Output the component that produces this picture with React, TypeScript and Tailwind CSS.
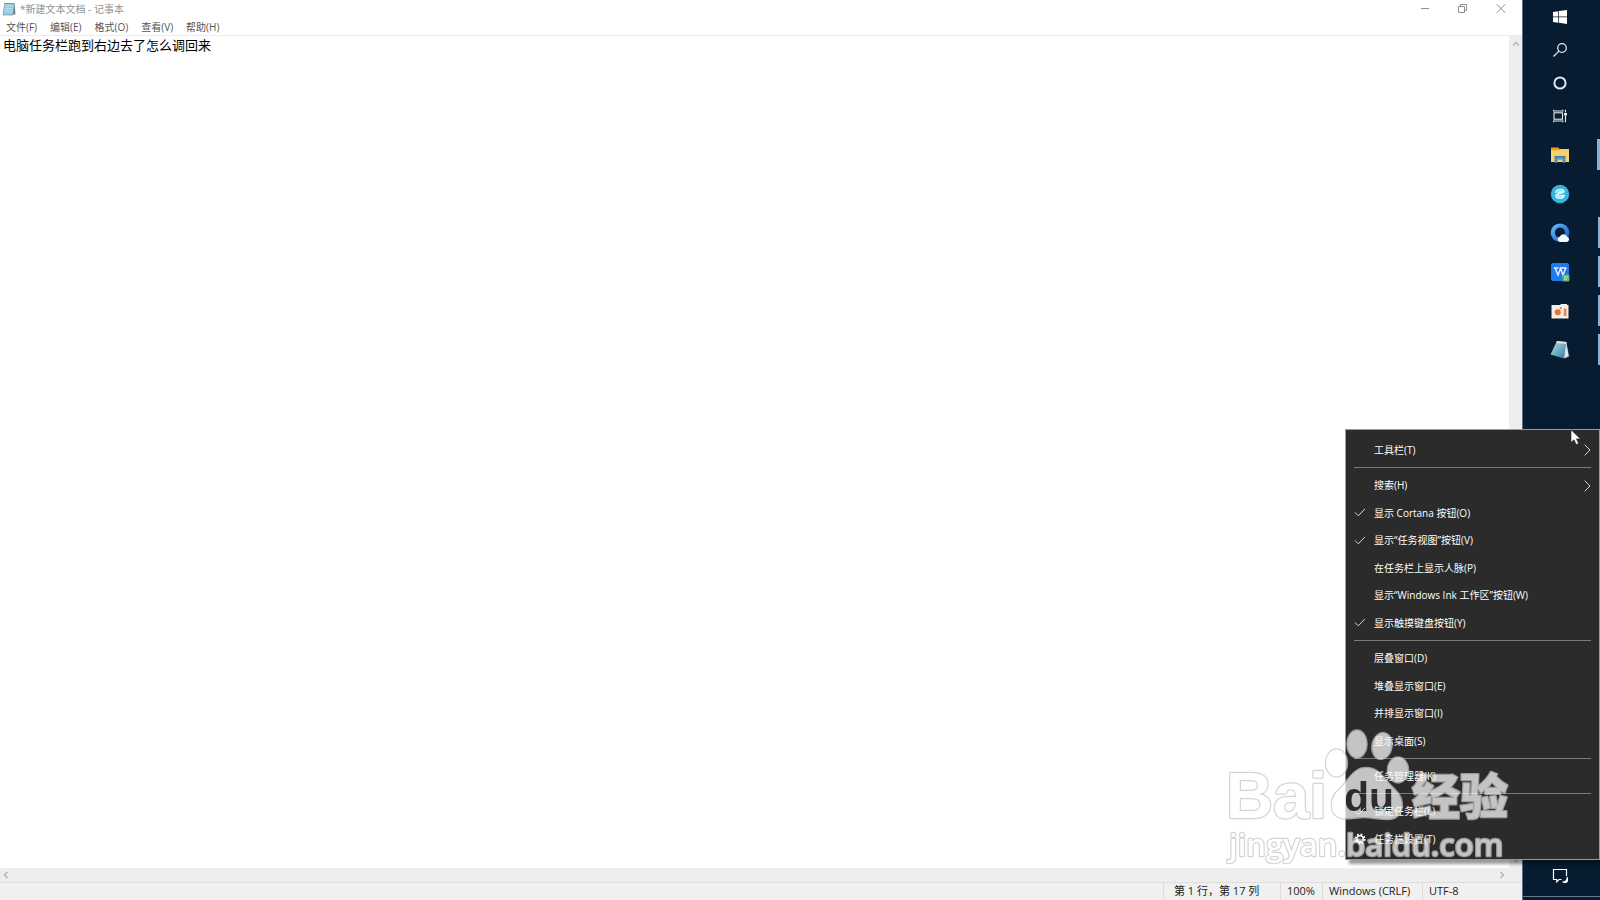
import { useState } from 'react'
import type { ReactNode } from 'react'

const MENUS = ['文件(F)', '编辑(E)', '格式(O)', '查看(V)', '帮助(H)']

type Item = { label: string; checked?: boolean; sub?: boolean; gear?: boolean }

const GROUPS: { height: string; items: Item[] }[] = [
  { height: 'h-[28px]', items: [{ label: '工具栏(T)', sub: true }] },
  {
    height: 'h-[165px]',
    items: [
      { label: '搜索(H)', sub: true },
      { label: '显示 Cortana 按钮(O)', checked: true },
      { label: '显示“任务视图”按钮(V)', checked: true },
      { label: '在任务栏上显示人脉(P)' },
      { label: '显示“Windows Ink 工作区”按钮(W)' },
      { label: '显示触摸键盘按钮(Y)', checked: true },
    ],
  },
  {
    height: 'h-[110px]',
    items: [{ label: '层叠窗口(D)' }, { label: '堆叠显示窗口(E)' }, { label: '并排显示窗口(I)' }, { label: '显示桌面(S)' }],
  },
  { height: 'h-[27px]', items: [{ label: '任务管理器(K)' }] },
  { height: 'h-[55px]', items: [{ label: '锁定任务栏(L)', checked: true }, { label: '任务栏设置(T)', gear: true }] },
]

function NotepadIcon({ className }: { className: string }) {
  return (
    <svg viewBox="0 0 20 20" className={className} aria-hidden="true">
      <defs>
        <linearGradient id="pad" x1="0" y1="0" x2="1" y2="1">
          <stop offset="0" stopColor="#b9dfe9" />
          <stop offset="1" stopColor="#2f7f9c" />
        </linearGradient>
      </defs>
      <path d="M16 1.5 L19.5 16.5 L15 18.5 Z" fill="#7d7a70" />
      <path d="M7 1 L16.5 2 L14 18.5 L0.5 14.5 Z" fill="url(#pad)" />
      <path d="M16.3 2 L18.5 16 L14 18.5 Z" fill="#dfe9e9" />
      <path d="M7 1 L16.5 2 L16.2 4 L6.2 3.1 Z" fill="#d9e3e4" />
    </svg>
  )
}

function TitleIcon() {
  return (
    <svg viewBox="0 0 14 14" className="h-3.5 w-3.5" aria-hidden="true">
      <path d="M2.8 1.5 H12.5 L11 13 H1 Z" fill="#9accdf" stroke="#6f97a6" strokeWidth="0.7" />
      <path d="M3.5 4 H10.8 M3.2 6.5 H10.5 M3 9 H10" stroke="#c0e3ee" strokeWidth="0.8" />
      <path d="M12.5 1.5 L13.5 12 L11 13 Z" fill="#6c7f86" />
      <path d="M2.5 1.5 H12.5" stroke="#77705f" strokeWidth="1.2" strokeDasharray="1 1" />
    </svg>
  )
}

const SYSTEM_BUTTONS: { name: string; icon: ReactNode }[] = [
  {
    name: '开始',
    icon: (
      <svg viewBox="0 0 14 14" className="h-3.5 w-3.5" fill="#fff">
        <path d="M0 2 L5.3 1.2 V6.5 H0 Z M6 1.1 L14 0 V6.5 H6 Z M0 7.3 H5.3 V12.7 L0 12 Z M6 7.3 H14 V14 L6 12.8 Z" />
      </svg>
    ),
  },
  {
    name: '搜索',
    icon: (
      <svg viewBox="0 0 14 14" className="h-3.5 w-3.5" fill="none" stroke="#e3e9ee" strokeWidth="1.3">
        <circle cx="9" cy="5" r="4.3" />
        <path d="M5.9 8.1 L0.5 13.5" />
      </svg>
    ),
  },
  {
    name: 'Cortana',
    icon: (
      <svg viewBox="0 0 14 14" className="h-3.5 w-3.5" fill="none" stroke="#dfe9f0" strokeWidth="2">
        <circle cx="7" cy="7" r="5.6" />
      </svg>
    ),
  },
  {
    name: '任务视图',
    icon: (
      <svg viewBox="0 0 14 14" className="h-3.5 w-3.5" fill="none" stroke="#e3e9ee" strokeWidth="1.1">
        <rect x="1" y="3.8" width="8.5" height="6.4" />
        <path d="M0.6 0.8 V2 H9.9 V0.8 M0.6 13.2 V12 H9.9 V13.2 M12.5 0.8 V3.5 M12.5 7 V13.2" />
        <rect x="11.2" y="4" width="2.6" height="2.6" fill="#fff" stroke="none" />
      </svg>
    ),
  },
]

const APPS: { name: string; mark: string; icon: ReactNode }[] = [
  {
    name: '文件资源管理器',
    mark: 'w-[3px]',
    icon: (
      <svg viewBox="0 0 20 20" className="h-5 w-5">
        <path d="M1 2.5 H8.5 L9.5 4 H19 V17 H1 Z" fill="#e2a11d" />
        <path d="M1 5.2 H10 L11 4 H19 V17 H1 Z" fill="#fad06c" />
        <path d="M4.5 17.8 V11 H15.5 V17.8 H12.5 V14.5 H7.5 V17.8 Z" fill="#4f94b8" />
        <path d="M4.5 11 H15.5 V12.2 H4.5 Z" fill="#3f7f9f" />
      </svg>
    ),
  },
  {
    name: '浏览器',
    mark: 'w-0',
    icon: (
      <svg viewBox="0 0 20 20" className="h-5 w-5">
        <circle cx="10" cy="10" r="9.2" fill="#37b4de" />
        <path
          d="M5.8 8.4 C6.5 5 13.4 4.4 14 7.4 C14.2 9.6 6.4 9 6 11.8 C6.2 15 13 15.2 14.2 11.6 M8 8.6 C10 7.4 11.6 7.6 12.4 7.8 M8 12 C10 12.4 12 11.6 14.2 11.2"
          fill="none"
          stroke="#d8f8fb"
          strokeWidth="1.6"
          strokeLinecap="round"
        />
      </svg>
    ),
  },
  {
    name: 'QQ浏览器',
    mark: 'w-[2px]',
    icon: (
      <svg viewBox="0 0 20 20" className="h-5 w-5">
        <defs>
          <linearGradient id="ring" x1="0" y1="0" x2="1" y2="1">
            <stop offset="0" stopColor="#5fb9f4" />
            <stop offset="1" stopColor="#1560cf" />
          </linearGradient>
        </defs>
        <circle cx="10" cy="9.7" r="7.2" fill="none" stroke="url(#ring)" strokeWidth="4.2" />
        <path d="M9.7 19 A2.9 2.9 0 0 1 9.9 13.4 A4 4 0 0 1 16.9 13.4 A2.9 2.9 0 0 1 17 19 Z" fill="#f7fbff" />
      </svg>
    ),
  },
  {
    name: 'WPS',
    mark: 'w-[2px]',
    icon: (
      <svg viewBox="0 0 20 20" className="h-5 w-5">
        <rect x="1" y="1" width="18" height="18" rx="2.5" fill="#2079f0" />
        <path d="M4 6 H8.5 M5.2 6 L8 13 L10.6 6.4 L13 13 L15.8 6 M9.6 6 H16.6" fill="none" stroke="#e6f2ff" strokeWidth="1.4" />
        <rect x="12.5" y="12.5" width="7" height="7" rx="1.5" fill="#65b56b" />
        <path d="M14 15 H18 M14 17.2 H17" stroke="#c9edc8" strokeWidth="1" />
      </svg>
    ),
  },
  {
    name: '录屏',
    mark: 'w-[2px]',
    icon: (
      <svg viewBox="0 0 20 20" className="h-5 w-5">
        <path d="M1.5 4 H10.5 V3 H17 V4 H18.5 V17.5 H1.5 Z" fill="#f3ece7" />
        <circle cx="7.8" cy="11.2" r="3" fill="#e2743a" />
        <circle cx="10.8" cy="7.2" r="1.1" fill="#d98a63" />
        <rect x="13.8" y="7.5" width="2.6" height="7.5" fill="#e08a5c" />
      </svg>
    ),
  },
  { name: '记事本', mark: 'w-[2px]', icon: <NotepadIcon className="h-5 w-5" /> },
]

function Taskbar() {
  return (
    <nav className="flex w-[78px] shrink-0 flex-col border-l border-[#5b7286] bg-[#081c31]">
      {SYSTEM_BUTTONS.map((b) => (
        <button key={b.name} aria-label={b.name} className="flex h-[33px] items-center justify-center pr-[3px]">
          {b.icon}
        </button>
      ))}
      <div className="mt-[3px] flex flex-col">
        {APPS.map((a) => (
          <button key={a.name} aria-label={a.name} className="relative flex h-[39px] items-center justify-center pr-[3px]">
            {a.icon}
            <span className={`absolute right-0 top-1 h-[31px] bg-[#86b2dc] ${a.mark}`} />
          </button>
        ))}
      </div>
      <button aria-label="操作中心" className="mt-auto flex h-[42px] items-center justify-center pr-[3px]">
        <svg viewBox="0 0 16 16" className="h-4 w-4" fill="none" stroke="#fff" strokeWidth="1.2">
          <path d="M9.5 12.5 H7 L4.8 14.8 V12.5 H1.5 V2.5 H14.5 V9" />
          <path d="M14.5 9.5 A3.5 3.5 0 1 1 10 14.5 A4 4 0 0 0 14.5 9.5 Z" fill="#fff" stroke="none" />
        </svg>
      </button>
      <button aria-label="显示桌面" className="h-1 border-t border-[#64798c]" />
    </nav>
  )
}

function ContextMenu() {
  return (
    <div
      role="menu"
      className="absolute right-0 top-[429px] w-[255px] border border-[#9a9a9a] bg-[#2b2b2b] px-2 py-1.5 text-[10px] text-white shadow-[4px_4px_3px_rgba(0,0,0,0.4)]"
    >
      {GROUPS.map((g, i) => (
        <div key={g.items[0].label}>
          {i > 0 && <hr className="mb-1 mt-[3px] border-t border-[#7b7b7b]" />}
          <div className={`flex flex-col ${g.height}`}>
            {g.items.map((item) => (
              <button key={item.label} role="menuitem" className="flex flex-1 items-center whitespace-nowrap text-left">
                <span className="w-5 shrink-0">
                  {item.checked && (
                    <svg viewBox="0 0 12 12" className="h-3 w-3" fill="none" stroke="#d6d6d6" strokeWidth="1">
                      <path d="M1 5.5 L4.3 8.8 L11 1.8" />
                    </svg>
                  )}
                  {item.gear && (
                    <svg viewBox="0 0 12 12" className="h-3 w-3" fill="none" stroke="#fff">
                      <circle cx="6" cy="6" r="3.2" strokeWidth="1.6" />
                      <circle cx="6" cy="6" r="4.8" strokeWidth="1.6" strokeDasharray="1.9 1.87" />
                    </svg>
                  )}
                </span>
                <span className="flex-1">{item.label}</span>
                {item.sub && (
                  <svg viewBox="0 0 7 12" className="h-3 w-[7px]" fill="none" stroke="#d6d6d6" strokeWidth="1">
                    <path d="M0.7 0.7 L6 6 L0.7 11.3" />
                  </svg>
                )}
              </button>
            ))}
          </div>
        </div>
      ))}
    </div>
  )
}

function Watermark() {
  return (
    <svg viewBox="0 0 300 150" className="pointer-events-none absolute right-[80px] top-[725px] h-[150px] w-[300px]">
      <defs>
        {/* cuts the "du" letters out of the paw */}
        <mask id="du">
          <rect width="300" height="150" fill="#fff" />
          <text x="124" y="86" fontSize="41" fontWeight="700" fontFamily="'Liberation Sans', sans-serif" fill="#000">
            du
          </text>
        </mask>
      </defs>
      <g fill="#fff" stroke="#c6c6c6" strokeWidth="2.5" strokeLinejoin="round" opacity="0.72" paintOrder="stroke">
        <text x="6" y="93" fontSize="65" fontWeight="700" fontFamily="'Liberation Sans', sans-serif">
          Bai
        </text>
        <ellipse cx="116.5" cy="38" rx="10.5" ry="13.5" />
        <ellipse cx="137" cy="19" rx="9.5" ry="13.5" />
        <ellipse cx="162" cy="21" rx="9.5" ry="13" transform="rotate(10 162 21)" />
        <ellipse cx="178" cy="45" rx="10" ry="12.5" />
        <g mask="url(#du)">
          <path d="M146 43 C160 43 164 55 174 64 C187 76 183 94 168 94 C158 94 152 92 144 92 C136 92 130 94 122 93 C109 91 109 73 119 65 C128 57 133 43 146 43 Z" />
        </g>
        <text x="192" y="89" fontSize="48" fontWeight="900" fontFamily="'Noto Sans CJK SC', sans-serif">
          经验
        </text>
        <text x="9" y="131" fontSize="31" fontWeight="600" fontFamily="'Open Sans', sans-serif">
          jingyan.baidu.com
        </text>
      </g>
    </svg>
  )
}

function Arrow({ d }: { d: string }) {
  return (
    <svg viewBox="0 0 8 8" className="h-2 w-2" fill="none" stroke="#b4b4b4" strokeWidth="1.5">
      <path d={d} />
    </svg>
  )
}

function Notepad() {
  const [text, setText] = useState('电脑任务栏跑到右边去了怎么调回来')

  return (
    <div className="flex min-w-0 flex-1 flex-col bg-white">
      <header className="flex h-[18px] items-center">
        <div className="flex flex-1 items-center gap-1 pl-0.5 text-[10px] text-[#929292]">
          <TitleIcon />
          <h1>*新建文本文档 - 记事本</h1>
        </div>
        <div className="flex h-full pr-0.5 text-[#8f8f8f]">
          <button aria-label="最小化" className="flex w-[38px] items-center justify-center">
            <svg viewBox="0 0 10 10" className="h-2.5 w-2.5" stroke="currentColor">
              <path d="M1 4.5 H9" />
            </svg>
          </button>
          <button aria-label="还原" className="flex w-[38px] items-center justify-center">
            <svg viewBox="0 0 10 10" className="h-2.5 w-2.5" fill="none" stroke="currentColor">
              <path d="M0.5 2.5 H6.5 V8.5 H0.5 Z M2.5 2 V0.5 H8.5 V6.5 H7" />
            </svg>
          </button>
          <button aria-label="关闭" className="flex w-[38px] items-center justify-center">
            <svg viewBox="0 0 10 10" className="h-2.5 w-2.5" stroke="currentColor">
              <path d="M0.7 0.2 L9.3 8.8 M9.3 0.2 L0.7 8.8" />
            </svg>
          </button>
        </div>
      </header>

      <nav className="flex h-[18px] items-center gap-[13px] border-b border-[#ececec] pl-1.5 pt-px text-[10px] text-[#555]">
        {MENUS.map((m) => (
          <button key={m}>{m}</button>
        ))}
      </nav>

      <main className="flex min-h-0 flex-1">
        <textarea
          aria-label="文本编辑区"
          spellCheck={false}
          value={text}
          onChange={(e) => setText(e.target.value)}
          className="min-w-0 flex-1 resize-none overflow-hidden pl-[3px] text-[13px] leading-[18px] text-black outline-none"
        />
        <div className="flex w-[13px] flex-col items-center justify-between bg-[#eee] py-1">
          <Arrow d="M1 5.5 L4 2.5 L7 5.5" />
          <Arrow d="M1 2.5 L4 5.5 L7 2.5" />
        </div>
      </main>
      <div className="flex h-[14px] items-center justify-between bg-[#eee] pl-0.5 pr-4">
        <Arrow d="M5.5 1 L2.5 4 L5.5 7" />
        <Arrow d="M2.5 1 L5.5 4 L2.5 7" />
      </div>

      <footer className="flex h-[18px] items-center justify-end border-t border-[#dedede] bg-[#f0f0f0] text-[11px] text-[#222]">
        <span className="flex h-full w-[117px] items-center border-l border-[#dcdcdc] pl-2.5">第 1 行，第 17 列</span>
        <span className="flex h-full w-[42px] items-center border-l border-[#dcdcdc] pl-1.5">100%</span>
        <span className="flex h-full w-[100px] items-center border-l border-[#dcdcdc] pl-1.5">Windows (CRLF)</span>
        <span className="flex h-full w-[100px] items-center border-l border-[#dcdcdc] pl-1.5">UTF-8</span>
      </footer>
    </div>
  )
}

export default function App() {
  return (
    <div className="relative flex h-screen overflow-hidden font-['Open_Sans','Noto_Sans_CJK_SC',sans-serif]">
      <Notepad />
      <Taskbar />
      <ContextMenu />
      <Watermark />
      {/* mouse pointer */}
      <svg viewBox="0 0 12 18" className="pointer-events-none absolute right-[18px] top-[429px] h-[18px] w-3">
        <path d="M1 0.8 V13.5 L4 10.8 L6.2 15.6 L8.6 14.5 L6.5 9.9 H10.5 Z" fill="#fff" stroke="#222" strokeWidth="0.6" />
      </svg>
    </div>
  )
}
